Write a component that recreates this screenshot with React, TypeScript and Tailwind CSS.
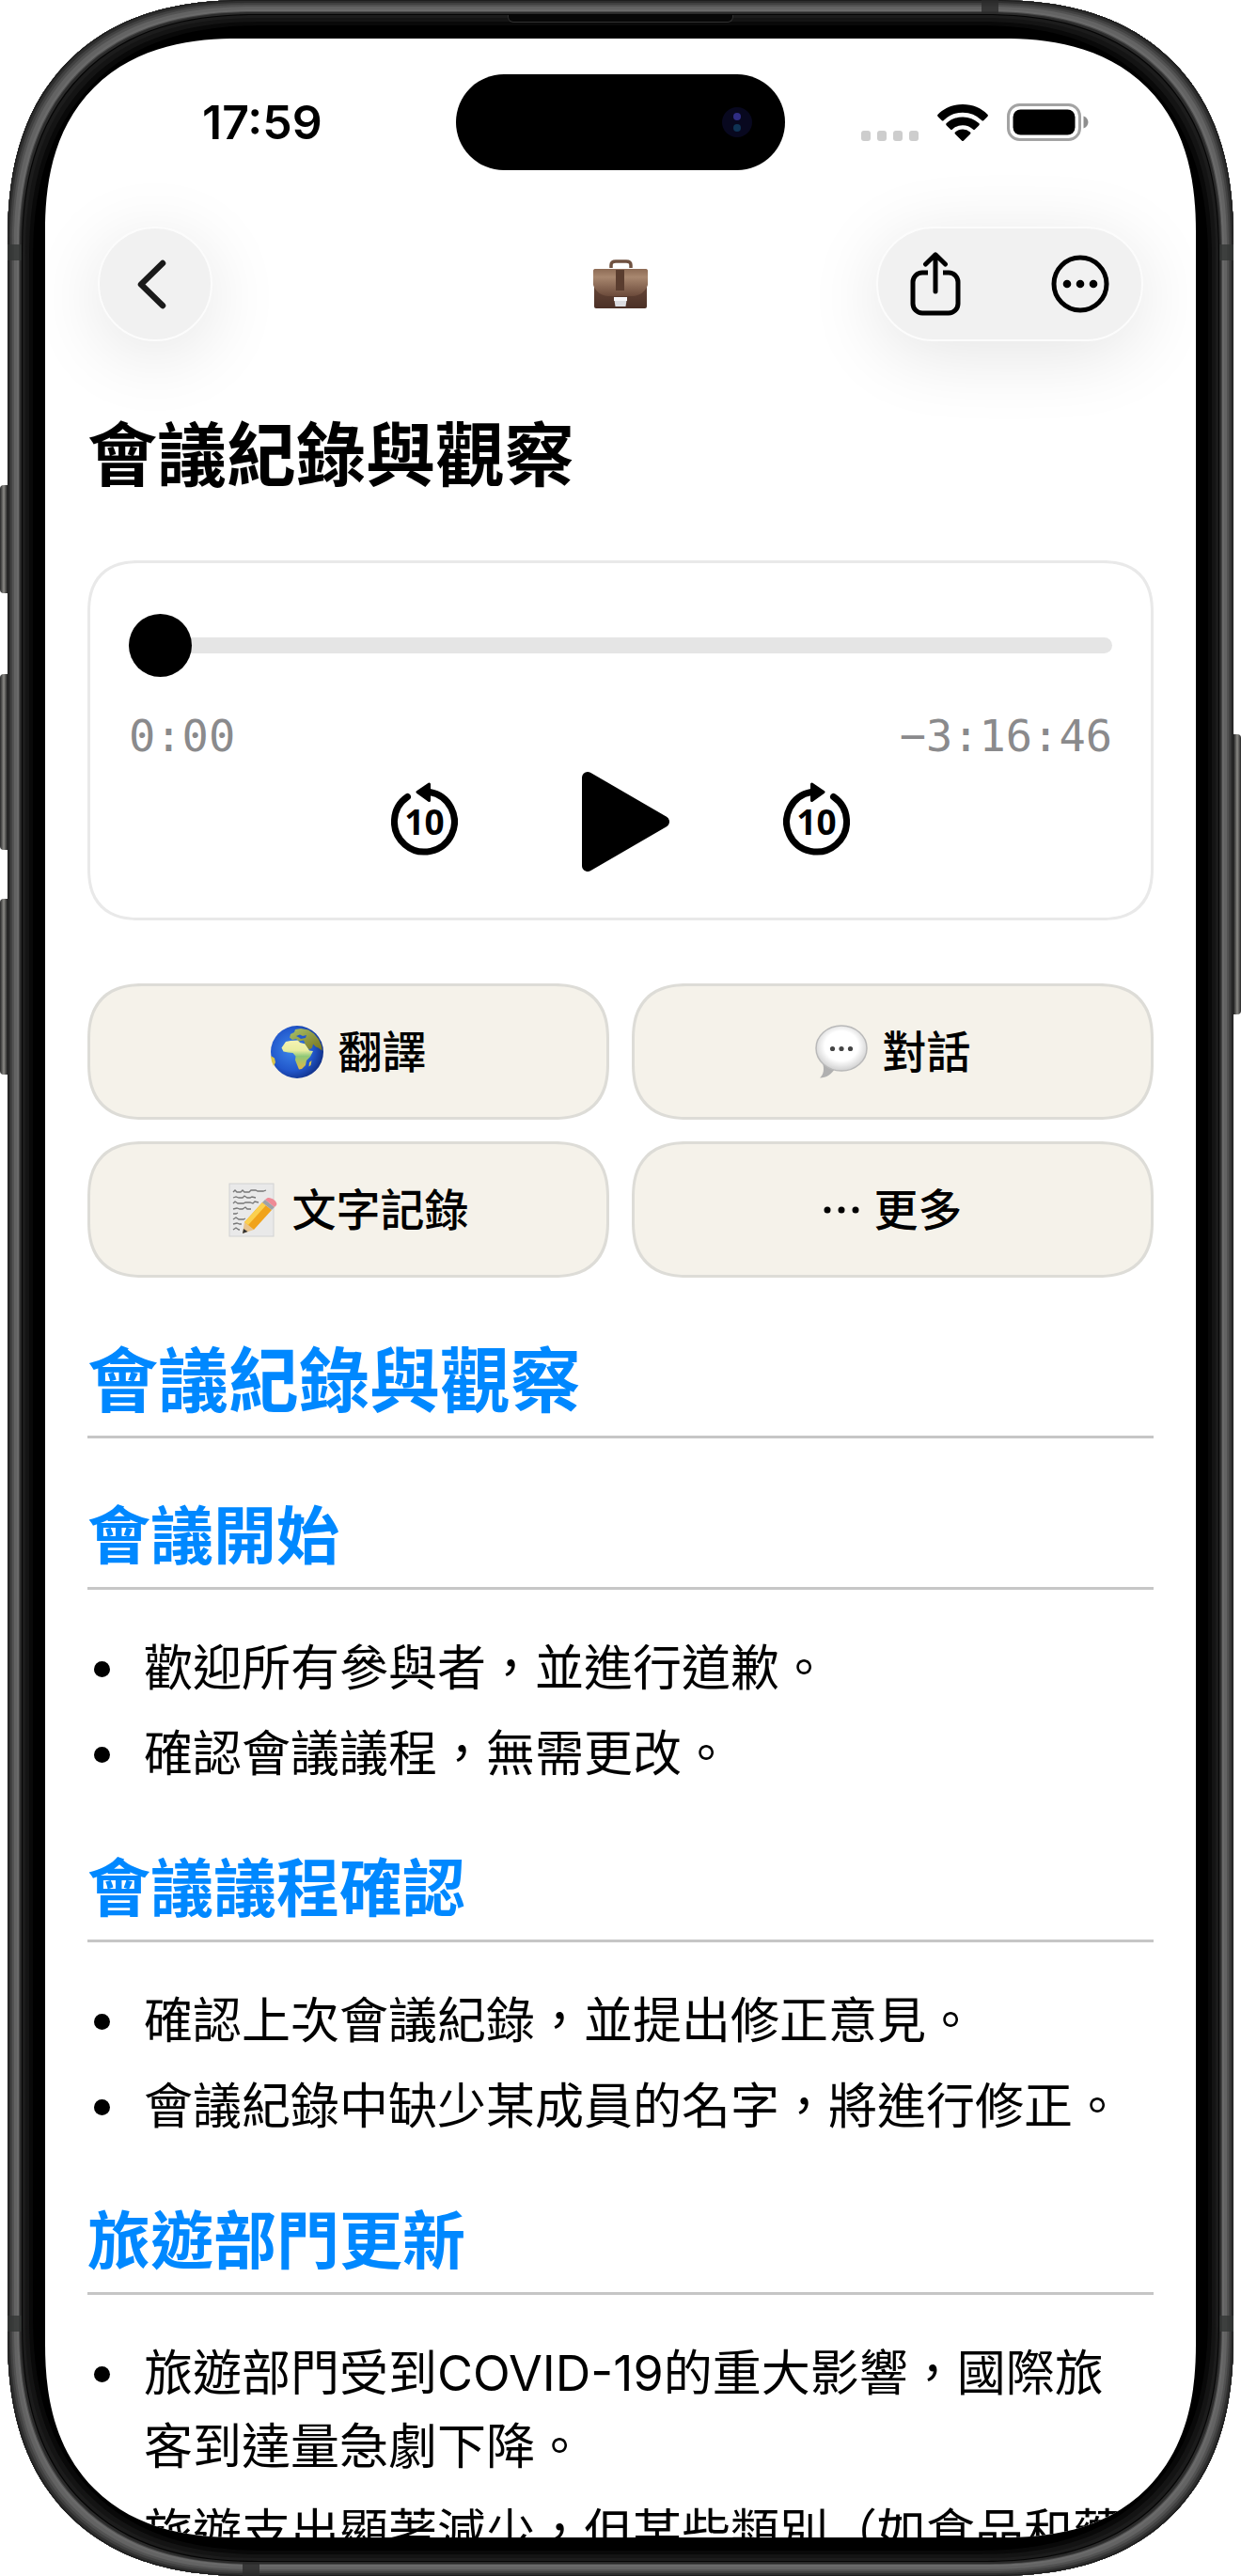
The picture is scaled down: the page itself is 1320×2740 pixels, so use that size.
import type { ReactNode } from 'react'

type NoteSection = {
  title: string
  items: string[]
}

const SECTIONS: NoteSection[] = [
  {
    title: '會議開始',
    items: ['歡迎所有參與者，並進行道歉。', '確認會議議程，無需更改。']
  },
  {
    title: '會議議程確認',
    items: [
      '確認上次會議紀錄，並提出修正意見。',
      '會議紀錄中缺少某成員的名字，將進行修正。'
    ]
  },
  {
    title: '旅遊部門更新',
    items: [
      '旅遊部門受到COVID-19的重大影響，國際旅客到達量急劇下降。',
      '旅遊支出顯著減少，但某些類別（如食品和藥'
    ]
  }
]

function WifiIcon() {
  return (
    <svg viewBox="0 0 54 39" className="w-[54px] h-[39px]" aria-hidden="true">
      <path d="M27 0C16.600 0 7.100 4 .6 10.700a1.600 1.600 0 0 0 0 2.200l4 4.200a1.600 1.600 0 0 0 2.200 0A28.500 28.500 0 0 1 27 8.800a28.500 28.500 0 0 1 20.200 8.300 1.600 1.600 0 0 0 2.200 0l4-4.200a1.600 1.600 0 0 0 0-2.200C46.900 4 37.400 0 27 0Z" />
      <path d="M27 13.400c-6.600 0-12.700 2.500-17.200 6.700a1.600 1.600 0 0 0 0 2.300l4.100 4.100a1.600 1.600 0 0 0 2.200 0A16 16 0 0 1 27 22.200a16 16 0 0 1 10.900 4.300 1.600 1.600 0 0 0 2.200 0l4.100-4.100a1.600 1.600 0 0 0 0-2.300A25 25 0 0 0 27 13.400Z" />
      <path d="M27 26.600c-3 0-5.800 1.100-7.900 2.900a1.500 1.500 0 0 0 0 2.200l6.800 6.800a1.500 1.500 0 0 0 2.200 0l6.800-6.800a1.500 1.500 0 0 0 0-2.200 12 12 0 0 0-7.900-2.900Z" />
    </svg>
  )
}

function BatteryIcon() {
  return (
    <svg viewBox="0 0 87 40" className="w-[87px] h-10" aria-hidden="true">
      <rect
        x="1.500"
        y="1.500"
        width="76"
        height="37"
        rx="12"
        fill="none"
        stroke="#a3a3a3"
        strokeWidth="3"
      />
      <rect x="6.500" y="6.500" width="66" height="27" rx="8" />
      <path d="M81.500 13.500c3 1.200 5 3.600 5 6.500s-2 5.300-5 6.500Z" fill="#8e8e8e" />
    </svg>
  )
}

function StatusBar() {
  return (
    <div className="mt-[38px] grid grid-cols-[1fr_350px_1fr] items-center">
      <span className="pl-[167px] text-[50px] leading-[60px] font-semibold">
        17:59
      </span>
      <div className="flex h-[102px] items-center justify-end rounded-full bg-black pr-[35px]">
        <div className="flex size-8 items-center justify-center rounded-full bg-[#08081f]">
          <div className="flex h-5 flex-col justify-between">
            <i className="size-2 rounded-full bg-[#2f2d84]" />
            <i className="size-2 rounded-full bg-[#0f3354]" />
          </div>
        </div>
      </div>
      <div className="flex items-end justify-end gap-5 pr-[114px]">
        <div className="flex gap-[7px]">
          <i className="h-[11px] w-2.5 rounded-[3px] bg-[#cdcdcd]" />
          <i className="h-[11px] w-2.5 rounded-[3px] bg-[#cdcdcd]" />
          <i className="h-[11px] w-2.5 rounded-[3px] bg-[#cdcdcd]" />
          <i className="h-[11px] w-2.5 rounded-[3px] bg-[#cdcdcd]" />
        </div>
        <WifiIcon />
        <BatteryIcon />
      </div>
    </div>
  )
}

function BriefcaseIcon() {
  return (
    <svg viewBox="0 0 58 52" className="w-[58px] h-[52px]" aria-hidden="true">
      <defs>
        <linearGradient id="case" x1="0" y1="0" x2="0" y2="1">
          <stop offset="0" stopColor="#7a5745" />
          <stop offset="1" stopColor="#4b3026" />
        </linearGradient>
        <linearGradient id="flap" x1="0" y1="0" x2="0" y2="1">
          <stop offset="0" stopColor="#8d6b55" />
          <stop offset="0.300" stopColor="#a8876f" />
          <stop offset="1" stopColor="#6b4a3a" />
        </linearGradient>
      </defs>
      <path
        d="M19 9V6c0-2.500 2-4 5-4h11c3 0 5 1.500 5 4v3"
        fill="none"
        stroke="#6f5140"
        strokeWidth="3.500"
      />
      <rect x="1" y="10" width="56" height="42" rx="2" fill="url(#case)" />
      <path
        d="M2 10h54c1.500 0 2 1 2 2v15c-2 7-9 12-16 12H16C9 39 2 34 0 27V12c0-1 .5-2 2-2Z"
        fill="url(#flap)"
      />
      <path d="M24 11h9v22h-9Z" fill="#5a3d2f" />
      <path d="M22 40h14l-1.500 10h-11Z" fill="#dcdce0" />
      <path d="M22 40h14v4H22Z" fill="#f6f6f8" />
    </svg>
  )
}

function ShareIcon() {
  return (
    <svg
      viewBox="0 0 54 68"
      className="w-[54px] h-[68px]"
      fill="none"
      stroke="black"
      strokeWidth="5"
      strokeLinecap="round"
      strokeLinejoin="round"
      aria-hidden="true"
    >
      <path d="M27 42V3.500M16.500 13 27 2.800 37.500 13" />
      <path
        d="M19 22h-6A10 10 0 0 0 3 32v23a10 10 0 0 0 10 10h28a10 10 0 0 0 10-10V32a10 10 0 0 0-10-10h-6"
        strokeLinecap="butt"
      />
    </svg>
  )
}

function MoreIcon() {
  return (
    <svg viewBox="0 0 62 62" className="size-[62px]" aria-hidden="true">
      <circle cx="31" cy="31" r="28" fill="none" stroke="black" strokeWidth="5" />
      <circle cx="17" cy="31" r="4.300" />
      <circle cx="31" cy="31" r="4.300" />
      <circle cx="45" cy="31" r="4.300" />
    </svg>
  )
}

function NavBar() {
  return (
    <nav className="mt-[60px] grid grid-cols-[1fr_auto_1fr] items-center px-14">
      <button
        aria-label="返回"
        className="flex size-[122px] items-center justify-center rounded-full border-2 border-[#fcfcfc] bg-[#f1f1f1] pr-2 shadow-[0_14px_80px_rgba(0,0,0,0.11)]"
      >
        <svg
          viewBox="0 0 31 53"
          className="w-[31px] h-[53px]"
          fill="none"
          stroke="#1a1a1a"
          strokeWidth="6.500"
          strokeLinecap="round"
          strokeLinejoin="round"
        >
          <path d="M27 4 4 26.500 27 49" />
        </svg>
      </button>
      <BriefcaseIcon />
      <div className="flex h-[122px] items-center gap-24 justify-self-end rounded-full border-2 border-[#fcfcfc] bg-[#f1f1f1] px-[34px] shadow-[0_14px_80px_rgba(0,0,0,0.11)]">
        <button aria-label="分享">
          <ShareIcon />
        </button>
        <button aria-label="更多選項">
          <MoreIcon />
        </button>
      </div>
    </nav>
  )
}

function SkipIcon({ forward = false }: { forward?: boolean }) {
  return (
    <svg viewBox="0 0 71 84" className="w-[71px] h-[84px]" aria-hidden="true">
      <g transform={forward ? 'matrix(-1 0 0 1 71 0)' : undefined}>
        <path
          d="M41 10.500A32 32 0 1 1 17.500 15.500"
          fill="none"
          stroke="black"
          strokeWidth="7"
          strokeLinecap="round"
        />
        <path
          d="M28 10.500 40.500 2v17.500Z"
          stroke="black"
          strokeWidth="3"
          strokeLinejoin="round"
        />
      </g>
      <text
        x="35.500"
        y="56"
        textAnchor="middle"
        className="font-['Open_Sans',sans-serif] text-[37px] font-bold"
      >
        10
      </text>
    </svg>
  )
}

function Player() {
  return (
    <section className="mt-[67px] rounded-[56px] border-3 border-[#e9e9e9] px-[41px] pt-[54px] pb-[49px] [corner-shape:superellipse(1.300)]">
      <input
        type="range"
        min="0"
        max="11806"
        defaultValue="0"
        aria-label="播放進度"
        className="block h-[67px] w-full appearance-none bg-transparent [&::-webkit-slider-runnable-track]:h-[17px] [&::-webkit-slider-runnable-track]:rounded-full [&::-webkit-slider-runnable-track]:bg-[#e5e5e5] [&::-webkit-slider-thumb]:-mt-[25px] [&::-webkit-slider-thumb]:size-[67px] [&::-webkit-slider-thumb]:appearance-none [&::-webkit-slider-thumb]:rounded-full [&::-webkit-slider-thumb]:bg-black"
      />
      <div className="mt-[35px] flex justify-between font-['DejaVu_Sans_Mono',monospace] text-[47px] leading-[56px] text-[#8a8a8c]">
        <span>0:00</span>
        <span>−3:16:46</span>
      </div>
      <div className="mt-2.5 flex items-center justify-center gap-[118px]">
        <button aria-label="倒退 10 秒">
          <SkipIcon />
        </button>
        <button aria-label="播放">
          <svg viewBox="0 0 110 106" className="w-[110px] h-[106px]">
            <path
              d="M20 6 101 53 20 100Z"
              stroke="black"
              strokeWidth="12"
              strokeLinejoin="round"
            />
          </svg>
        </button>
        <button aria-label="快轉 10 秒">
          <SkipIcon forward />
        </button>
      </div>
    </section>
  )
}

function GlobeIcon() {
  return (
    <svg viewBox="0 0 56 56" className="size-14" aria-hidden="true">
      <defs>
        <radialGradient id="sea" cx="0.400" cy="0.450" r="0.620">
          <stop offset="0" stopColor="#3d86ea" />
          <stop offset="0.650" stopColor="#2258cc" />
          <stop offset="1" stopColor="#102f86" />
        </radialGradient>
        <linearGradient id="africa" x1="0" y1="0" x2="0" y2="1">
          <stop offset="0" stopColor="#f4f3b4" />
          <stop offset="0.350" stopColor="#e9eda0" />
          <stop offset="0.550" stopColor="#8fc878" />
          <stop offset="1" stopColor="#e3b843" />
        </linearGradient>
        <linearGradient id="eurasia" x1="0" y1="0" x2="1" y2="1">
          <stop offset="0" stopColor="#a9c26a" />
          <stop offset="1" stopColor="#77721c" />
        </linearGradient>
      </defs>
      <circle cx="28" cy="28" r="28" fill="url(#sea)" />
      <path
        d="m16 17 5-1 8-.5 2 2.500 6 1.500 4 7 4 .5-3 6-4 4-1 5-4 4-3 .5-2-5-2-5 .5-4-3-3.500-5-.5-5-1-2-4Z"
        fill="url(#africa)"
      />
      <path
        d="m20 13 1-4 4-2 1-3 6-1 8 1.500 6 4 5 6 3 7 .5 5-4-3-2.500-1-3-3-1 4-3 2-4-5-2-5-5 1-3-2.500-4 1-3-2.500Z"
        fill="url(#eurasia)"
      />
      <path d="m27 11 4-1.500 3 1.500 4-1-1 3-5 1-2-1.500Z" fill="#2258cc" />
      <path d="m41 39 2.500-2-1 5-2 1.500Z" fill="#d9c54c" />
      <path d="m0 32 4 2.500L5 39l-2 4a28 28 0 0 1-3-11Z" fill="#d9c54c" />
    </svg>
  )
}

function BubbleIcon() {
  return (
    <svg viewBox="0 0 56 58" className="w-14 h-[58px]" aria-hidden="true">
      <defs>
        <radialGradient id="bubble" cx="0.500" cy="0.450" r="0.550">
          <stop offset="0.600" stopColor="#ffffff" />
          <stop offset="1" stopColor="#cfcfcf" />
        </radialGradient>
      </defs>
      <path d="M8 41c2 6 1 12-3 15.500 7 0 13-4 16-10Z" fill="#b0b0b0" />
      <ellipse
        cx="28"
        cy="25"
        rx="27"
        ry="24"
        fill="url(#bubble)"
        stroke="#b9b9b9"
        strokeWidth="1.500"
      />
      <circle cx="18.500" cy="25.500" r="2.600" fill="#444" />
      <circle cx="28" cy="25.500" r="2.600" fill="#444" />
      <circle cx="37.500" cy="25.500" r="2.600" fill="#444" />
    </svg>
  )
}

function MemoIcon() {
  return (
    <svg viewBox="0 0 52 58" className="w-[52px] h-[58px]" aria-hidden="true">
      <rect x="1" y="1" width="47" height="56" fill="#e9e9e9" stroke="#d2d2d2" />
      <path
        d="m5 10 2-2 2 2h4l2-2 2 2h5l2-2h5l2 1h6l3-1M5 16l3-1 3 1h4l2-2 3 2h3l2-1 4 1M5 22l2-2 3 2h6l2-1h5l3 1 2-2 4 1M5 28l4-1 3 1h3l3-2 2 2h4M5 33h3l2-1M5 39l3-2 3 2h5l2-1M5 44l4-1 3 1h2M5 50l3-2 3 2h1"
        stroke="#777"
        strokeWidth="1.300"
        fill="none"
      />
      <path d="m15 54 2-12 10 8Z" fill="#e9c48d" />
      <path d="m15 54 1-5 4.500 3Z" fill="#333" />
      <path d="m17 42 19-21 10 8-19 21Z" fill="#f0a31b" />
      <path d="m17 42 19-21 4 3-19 21Z" fill="#fbd04f" />
      <path d="m36 21 3-3 10 8-3 3Z" fill="#9ea2a8" />
      <path d="m39 18 2-1.500c4-2 12 4 10 7.500l-2 2Z" fill="#ee8b96" />
    </svg>
  )
}

function ActionButton({
  icon,
  children
}: {
  icon: ReactNode
  children: ReactNode
}) {
  return (
    <button className="flex h-[145px] items-center justify-center gap-4 rounded-[60px] border-3 border-[#dddcd7] bg-[#f5f2ea] text-[47px] leading-[60px] font-medium [corner-shape:superellipse(1.300)]">
      {icon}
      {children}
    </button>
  )
}

function Notes() {
  return (
    <article>
      <h2 className="mt-[65px] border-b-3 border-[#c6c6c6] pb-[13px] text-[75px] leading-[90px] font-bold text-[#0088ff]">
        會議紀錄與觀察
      </h2>
      {SECTIONS.map((section) => (
        <section key={section.title}>
          <h3 className="mt-16 border-b-3 border-[#c6c6c6] pb-3.5 text-[67px] leading-[80px] font-bold text-[#0088ff]">
            {section.title}
          </h3>
          <ul className="mt-[45px] flex flex-col gap-[13px] pr-5 text-[52px] leading-[78px]">
            {section.items.map((item) => (
              <li key={item} className="flex gap-9 pl-[7px]">
                <i className="mt-[31px] size-[17px] shrink-0 rounded-full bg-black" />
                <span>{item}</span>
              </li>
            ))}
          </ul>
        </section>
      ))}
    </article>
  )
}

// Side keys and antenna bands sit over the frame edge
function FrameDetails() {
  return (
    <div aria-hidden="true">
      <i className="absolute top-[516px] left-0 h-[115px] w-2 rounded-l-sm bg-linear-to-r from-[#2a2a2a] via-[#8b8a86] to-[#222222]" />
      <i className="absolute top-[717px] left-0 h-[187px] w-2 rounded-l-sm bg-linear-to-r from-[#2a2a2a] via-[#8b8a86] to-[#222222]" />
      <i className="absolute top-[956px] left-0 h-[187px] w-2 rounded-l-sm bg-linear-to-r from-[#2a2a2a] via-[#8b8a86] to-[#222222]" />
      <i className="absolute top-[781px] right-0 h-[298px] w-2 rounded-r-sm bg-linear-to-l from-[#2a2a2a] via-[#8b8a86] to-[#222222]" />
      <i className="absolute top-[260px] left-2 h-[17px] w-[15px] bg-[#333635]/80" />
      <i className="absolute top-[260px] right-2 h-[17px] w-[15px] bg-[#333635]/80" />
      <i className="absolute bottom-[260px] left-2 h-[17px] w-[15px] bg-[#333635]/80" />
      <i className="absolute right-2 bottom-[260px] h-[17px] w-[15px] bg-[#333635]/80" />
      <i className="absolute top-0 right-[258px] h-[15px] w-[18px] bg-[#2b2b2b]/80" />
      <i className="absolute bottom-0 left-[258px] h-[15px] w-[18px] bg-[#2b2b2b]/80" />
      <i className="absolute top-[16px] left-1/2 h-2 w-[240px] -translate-x-1/2 rounded-b-md border border-t-0 border-[#303030] bg-[#070707]" />
    </div>
  )
}

export default function App() {
  return (
    <div className="relative h-screen bg-white px-2 font-[Inter,'Noto_Sans_CJK_TC',sans-serif] text-black">
      <div className="h-full rounded-[257px] bg-black px-10 py-[41px] shadow-[inset_0_0_0_1px_#1d1d1d,inset_0_0_0_3px_#2e2e2e,inset_0_0_0_5px_#414141,inset_0_0_0_7px_#525252,inset_0_0_0_10px_#636363,inset_0_0_0_12px_#6a6a6a,inset_0_0_0_13px_#484848,inset_0_0_0_15px_#2b2b2b,inset_0_0_0_16px_#050505,inset_0_0_0_19px_#1c1c1c,inset_0_0_0_23px_#141414,inset_0_0_0_27px_#090909] [corner-shape:superellipse(1.250)]">
        <main
          lang="zh-Hant"
          className="h-full overflow-hidden rounded-[206px] bg-white [corner-shape:superellipse(1.250)]"
        >
          <StatusBar />
          <NavBar />
          <div className="px-[45px]">
            <h1 className="mt-[76px] text-[74px] leading-[90px] font-bold">
              會議紀錄與觀察
            </h1>
            <Player />
            <div className="mt-[67px] grid grid-cols-2 gap-x-6 gap-y-[23px]">
              <ActionButton icon={<GlobeIcon />}>翻譯</ActionButton>
              <ActionButton icon={<BubbleIcon />}>對話</ActionButton>
              <ActionButton icon={<MemoIcon />}>文字記錄</ActionButton>
              <ActionButton
                icon={
                  <svg viewBox="0 0 38 10" className="w-[38px] h-2.5">
                    <circle cx="4" cy="5" r="3.500" />
                    <circle cx="19" cy="5" r="3.500" />
                    <circle cx="34" cy="5" r="3.500" />
                  </svg>
                }
              >
                更多
              </ActionButton>
            </div>
            <Notes />
          </div>
        </main>
      </div>
      <FrameDetails />
    </div>
  )
}
